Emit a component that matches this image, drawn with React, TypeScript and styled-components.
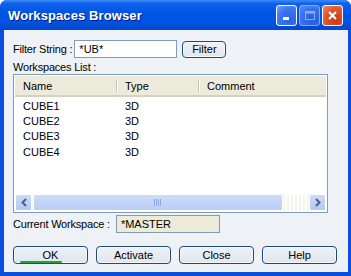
import React from "react";
import styled, { createGlobalStyle } from "styled-components";

const Global = createGlobalStyle`
  html, body { margin: 0; padding: 0; background: #fff; }
  body { font-family: Tahoma, "Liberation Sans", "DejaVu Sans", sans-serif; font-size: 11px; color: #000; }
`;

const Window = styled.div`
  width: 351px;
  height: 276px;
  display: flex;
  flex-direction: column;
  background: #0a4fe0;
  border-radius: 7px 7px 0 0;
  overflow: hidden;
  box-sizing: border-box;
`;

const TitleBar = styled.div`
  height: 30px;
  flex: none;
  display: flex;
  align-items: center;
  padding: 0 8px 0 8px;
  background: linear-gradient(to bottom, #3d8cf7 0%, #0f62ec 12%, #0055e5 40%, #0054e3 70%, #0048d0 100%);
  color: #fff;
`;

const Title = styled.div`
  flex: 1;
  font-family: "Liberation Sans", Arial, sans-serif;
  font-weight: bold;
  font-size: 13px;
  letter-spacing: 0.1px;
  text-shadow: 1px 1px 0 #0a1e7a;
  padding-top: 1px;
`;

const Caption = styled.div<{ $kind: "min" | "max" | "close" }>`
  width: 21px;
  height: 21px;
  margin-left: 2px;
  box-sizing: border-box;
  border: 1px solid #fff;
  border-radius: 3px;
  display: flex;
  align-items: center;
  justify-content: center;
  background: ${(p) =>
    p.$kind === "close"
      ? "radial-gradient(circle at 70% 75%, #c73b16 0%, #e0542c 55%, #f08a6a 100%)"
      : p.$kind === "max"
      ? "radial-gradient(circle at 70% 75%, #2a5fe0 0%, #4577ef 60%, #6d95f5 100%)"
      : "radial-gradient(circle at 70% 75%, #2b62e6 0%, #3d76f2 60%, #7ea3f8 100%)"};
  opacity: ${(p) => (p.$kind === "max" ? 0.85 : 1)};
  border-color: ${(p) => (p.$kind === "max" ? "#9db8f2" : "#fff")};
`;

const Body = styled.div`
  flex: 1;
  margin: 0 3px 4px 4px;
  background: #eef1f5;
  padding: 10px 0 0 9px;
  display: flex;
  flex-direction: column;
`;

const Row = styled.div<{ $mt?: number }>`
  display: flex;
  align-items: center;
  margin-top: ${(p) => p.$mt ?? 0}px;
`;

const Label = styled.span`
  white-space: nowrap;
  letter-spacing: -0.2px;
`;

const TextBox = styled.div<{ $w: number; $bg?: string; $ml?: number }>`
  width: ${(p) => p.$w}px;
  height: 18px;
  box-sizing: border-box;
  border: 1px solid #7f9db9;
  background: ${(p) => p.$bg ?? "#fff"};
  padding: 1px 0 0 4px;
  line-height: 15px;
  margin-left: ${(p) => p.$ml ?? 3}px;
`;

const Button = styled.div<{ $w: number; $h?: number; $ml?: number; $def?: boolean }>`
  position: relative;
  width: ${(p) => p.$w}px;
  height: ${(p) => p.$h ?? 18}px;
  margin-left: ${(p) => p.$ml ?? 0}px;
  box-sizing: border-box;
  border: 1px solid #1e4a78;
  border-radius: 4px;
  background: linear-gradient(to bottom, #eef2f7 0%, #dfe6ee 100%);
  display: flex;
  align-items: center;
  justify-content: center;
  box-shadow: inset 0 0 0 1px #f5f8fb;
  ${(p) =>
    p.$def
      ? `&::after { content: ""; position: absolute; left: 6px; width: 42px; bottom: 0px; height: 2px; background: #1fa23a; border-radius: 1px; }`
      : ""}
`;

const ListBox = styled.div`
  margin-top: 1px;
  width: 315px;
  height: 139px;
  box-sizing: border-box;
  border: 1px solid #7f9db9;
  background: #fff;
  display: flex;
  flex-direction: column;
  padding: 1px;
`;

const Header = styled.div`
  height: 21px;
  flex: none;
  display: grid;
  grid-template-columns: 102px 82px 1fr;
  background: #ebeadb;
  border-bottom: 2px solid #d6d2c2;
  box-sizing: border-box;
`;

const HeadCell = styled.div<{ $div?: boolean }>`
  display: flex;
  align-items: center;
  padding-left: 8px;
  position: relative;
  &::after {
    content: "";
    display: ${(p) => (p.$div ? "block" : "none")};
    position: absolute;
    right: 0;
    top: 4px;
    bottom: 3px;
    width: 1px;
    background: #c7c5b2;
    box-shadow: 1px 0 0 #fff;
  }
`;

const Rows = styled.div`
  flex: 1;
  padding-top: 1px;
`;

const DataRow = styled.div`
  display: grid;
  grid-template-columns: 102px 82px 1fr;
  height: 15.4px;
  align-items: center;
`;

const Cell = styled.div`
  padding-left: 8px;
`;

const ScrollBar = styled.div`
  height: 17px;
  flex: none;
  display: flex;
  align-items: stretch;
  background: #f6f5ef;
`;

const Arrow = styled.div`
  width: 17px;
  box-sizing: border-box;
  border: 1px solid #fff;
  border-radius: 2px;
  background: linear-gradient(to bottom, #cbdaf8, #b4c8f4);
  display: flex;
  align-items: center;
  justify-content: center;
`;

const Thumb = styled.div`
  width: 250px;
  margin-left: 1px;
  box-sizing: border-box;
  border: 1px solid #fff;
  border-radius: 2px;
  background: linear-gradient(to bottom, #cfdcf8, #b9cdf6);
  display: flex;
  align-items: center;
  justify-content: center;
`;

const Track = styled.div`
  flex: 1;
  background: repeating-linear-gradient(90deg, #f5f4ee 0 2px, #ffffff 2px 4px);
`;

const ButtonRow = styled.div`
  display: flex;
  margin-top: 13px;
`;

const Chevron = ({ dir }: { dir: "l" | "r" }) => (
  <svg width="8" height="9" viewBox="0 0 8 9">
    <path
      d={dir === "l" ? "M6 1 L2.5 4.5 L6 8" : "M2 1 L5.5 4.5 L2 8"}
      fill="none"
      stroke="#4d6185"
      strokeWidth="2"
    />
  </svg>
);

const Grip = () => (
  <svg width="8" height="7" viewBox="0 0 8 7">
    {[0, 2, 4, 6].map((x) => (
      <rect key={x} x={x} y={0} width="1" height="7" fill="#8fa9e6" />
    ))}
  </svg>
);

const rows = ["CUBE1", "CUBE2", "CUBE3", "CUBE4"];

export default function App() {
  return (
    <>
      <Global />
      <Window>
        <TitleBar>
          <Title>Workspaces Browser</Title>
          <Caption $kind="min">
            <svg width="13" height="13" viewBox="0 0 13 13">
              <rect x="3" y="8" width="6" height="3" fill="#fff" />
            </svg>
          </Caption>
          <Caption $kind="max">
            <svg width="13" height="13" viewBox="0 0 13 13">
              <rect x="2.5" y="2.5" width="9" height="8" fill="none" stroke="#a8c0f5" strokeWidth="1" />
              <rect x="2.5" y="2.5" width="9" height="2" fill="#a8c0f5" />
            </svg>
          </Caption>
          <Caption $kind="close">
            <svg width="13" height="13" viewBox="0 0 13 13">
              <path d="M3 3 L10 10 M10 3 L3 10" stroke="#fff" strokeWidth="2" />
            </svg>
          </Caption>
        </TitleBar>
        <Body>
          <Row>
            <Label>Filter String :</Label>
            <TextBox $w={103} $ml={2}>*UB*</TextBox>
            <Button $w={44} $h={17} $ml={5}>Filter</Button>
          </Row>
          <Row $mt={3}>
            <Label>Workspaces List :</Label>
          </Row>
          <ListBox>
            <Header>
              <HeadCell $div>Name</HeadCell>
              <HeadCell $div>Type</HeadCell>
              <HeadCell>Comment</HeadCell>
            </Header>
            <Rows>
              {rows.map((r) => (
                <DataRow key={r}>
                  <Cell>{r}</Cell>
                  <Cell>3D</Cell>
                  <Cell />
                </DataRow>
              ))}
            </Rows>
            <ScrollBar>
              <Arrow>
                <Chevron dir="l" />
              </Arrow>
              <Thumb>
                <Grip />
              </Thumb>
              <Track />
              <Arrow>
                <Chevron dir="r" />
              </Arrow>
            </ScrollBar>
          </ListBox>
          <Row $mt={2}>
            <Label>Current Workspace :</Label>
            <TextBox $w={104} $bg="#ecead9" $ml={6}>*MASTER</TextBox>
          </Row>
          <ButtonRow>
            <Button $w={75} $def>OK</Button>
            <Button $w={75} $ml={8}>Activate</Button>
            <Button $w={75} $ml={8}>Close</Button>
            <Button $w={75} $ml={8}>Help</Button>
          </ButtonRow>
        </Body>
      </Window>
    </>
  );
}
